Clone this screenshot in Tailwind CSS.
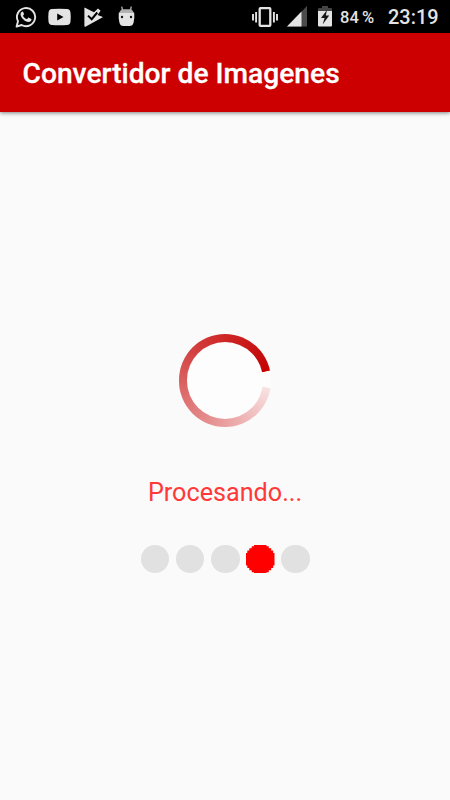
<!DOCTYPE html>
<html lang="es">
<head>
<meta charset="utf-8">
<meta name="viewport" content="width=device-width, initial-scale=1">
<title>Convertidor de Imagenes</title>
<script src="https://cdn.jsdelivr.net/npm/@tailwindcss/browser@4"></script>
</head>
<body class="flex h-[800px] w-[450px] flex-col overflow-hidden bg-[#fafafa] font-[Roboto,sans-serif]">
<div class="flex h-[33px] shrink-0 items-center justify-between bg-black pr-[11.500px] pl-[15px] text-[#e4e4e4]">
  <div class="flex items-center">
    <svg class="h-[22px] w-[22px]" viewBox="0 0 22 22" fill="none">
      <path d="M1.6 20.6 3 15.3A9.1 9.1 0 1 1 6.6 19Z" stroke="currentColor" stroke-width="1.9" stroke-linejoin="round"/>
      <path d="M7.700 5.500c-.8 0-2.200.9-2.200 2.800 0 3.300 4.700 7.700 7.900 7.700 1.900 0 3.100-1.200 3.100-2.500 0-.5-.2-.6-.6-.8l-2.100-1c-.4-.2-.6-.1-.8.2l-.8 1c-.2.200-.4.300-.8.100-1.500-.7-2.500-1.600-3.300-3-.2-.3 0-.5.200-.8l.6-.8c.2-.2.100-.4 0-.6l-.8-2c-.1-.3-.2-.3-.4-.3Z" fill="currentColor"/>
    </svg>
    <svg class="ml-[11px] h-[18px] w-[23px]" viewBox="0 0 23 18">
      <path fill="currentColor" fill-rule="evenodd" d="M4 1Q11.500.3 19 1q3.300.2 3.500 3.700.5 4.500 0 8.800-.2 3.100-3.500 3.500-7.500.7-15 0Q.8 16.700.5 13.500q-.5-4.400 0-8.800Q.8 1.300 4 1ZM9.200 5.400v7.100L15.500 9Z"/>
    </svg>
    <svg class="ml-[13px] h-[20px] w-[19px]" viewBox="0 0 19 20">
      <path fill="currentColor" d="M.4 1Q.4.400 1 .7L10 5.200 14 1.600 16.600 3.800 13.600 8 18.300 9.800q.7.400 0 .8L1.400 19.700q-1 .4-1-.6Z"/>
      <path d="m4 8.600 3.700 3.600L13.300 5.500" fill="none" stroke="#000" stroke-width="2"/>
    </svg>
    <svg class="ml-[14.500px] h-[21px] w-[17px]" viewBox="0 0 17 21">
      <path d="M3.700.6 4.500 4M13.300.6 12.500 4" stroke="#aaa" stroke-width="1.400"/>
      <path d="M1.500 6.800Q2.200 3.500 5 3.300h7q2.800.2 3.500 3.500Z" fill="#b0b0b0"/>
      <path d="M.8 6.500h15.400q.5 5.500-.6 10Q14.800 20 11.500 20h-6Q2.200 20 1.400 16.500.3 12 .8 6.500Z" fill="currentColor"/>
      <circle cx="4" cy="11" r="1.200" fill="#111"/><circle cx="13" cy="11" r="1.200" fill="#111"/>
    </svg>
  </div>
  <div class="flex items-center">
    <svg class="h-[20px] w-[26px]" viewBox="0 0 26 20">
      <rect x="7.700" y="1.200" width="10.600" height="17.600" rx=".8" fill="none" stroke="currentColor" stroke-width="2.300"/>
      <path d="M1 7v6.500M4.100 5v10.500M21.900 5v10.500M25 7v6.500" stroke="currentColor" stroke-width="1.900"/>
    </svg>
    <svg class="ml-[9px] h-[21px] w-[20px]" viewBox="0 0 20 21">
      <path d="M20 0v20.500H0Z" fill="#4a4a4a"/><path d="M14.500 5.600v14.900H0Z" fill="currentColor"/>
    </svg>
    <svg class="ml-[11px] h-[21px] w-[14px]" viewBox="0 0 14 21">
      <path d="M4 0h6v2h3q1 0 1 1v3H0V3q0-1 1-1h3Z" fill="#444"/>
      <path d="M0 5h14v14.500q0 1-1 1H1q-1 0-1-1Z" fill="currentColor"/>
      <path d="M9 4 3 12h3.600L4.600 18.500 11.200 9.500H7.800Z" fill="#151515"/>
    </svg>
    <span class="ml-[8px] w-[48px] pt-[3px] text-[16.500px] leading-none font-medium whitespace-nowrap [word-spacing:-1px]">84 %</span>
    <span class="pt-[3px] text-[19.900px] leading-none font-medium whitespace-nowrap">23:19</span>
  </div>
</div>
<header class="flex h-[79px] shrink-0 items-center bg-[#cc0000] pl-[22.500px] shadow-[0_1px_4px_rgba(0,0,0,0.5)]">
  <h1 class="pt-[4px] text-[28.200px] leading-none font-medium whitespace-nowrap text-white [-webkit-text-stroke:0.3px_white]">Convertidor de Imagenes</h1>
</header>
<main class="flex flex-1 flex-col items-center pt-[222.300px]">
  <div class="h-[92.500px] w-[92.500px] rounded-full bg-[conic-gradient(#cf2626_0deg,#c40c0c_60deg,#c80000_77deg,#fdfdfd_78deg,#fdfdfd_99deg,#f8e2e2_100deg,#f0bcbc_145deg,#e89b9b_185deg,#df7474_240deg,#d85858_280deg,#d23c3c_320deg,#cf2626_360deg)] p-[8px]">
    <div class="h-full w-full rounded-full bg-[#fdfdfd]"></div>
  </div>
  <p class="mt-[51.200px] text-[25.200px] leading-[30px] whitespace-nowrap text-[#ff3838]">Procesando...</p>
  <div class="mt-[37px] ml-[0.600px] flex gap-[6.700px]">
    <span class="h-[28.500px] w-[28.500px] rounded-full bg-[#e1e1e1]"></span>
    <span class="h-[28.500px] w-[28.500px] rounded-full bg-[#e1e1e1]"></span>
    <span class="h-[28.500px] w-[28.500px] rounded-full bg-[#e1e1e1]"></span>
    <svg class="h-[28.500px] w-[28.500px]" viewBox="0 0 28.500 28.500"><path fill="red" d="M8 0h12.500v1.200h2.300v2h2.400v2.400h2V8h1.300v12.500h-1.300v2.400h-2v2.400h-2.400v2h-2.300v1.200H8v-1.200H5.700v-2H3.300v-2.400h-2v-2.400H0V8h1.300V5.600h2V3.200h2.400v-2H8Z"/></svg>
    <span class="h-[28.500px] w-[28.500px] rounded-full bg-[#e1e1e1]"></span>
  </div>
</main>
</body>
</html>
